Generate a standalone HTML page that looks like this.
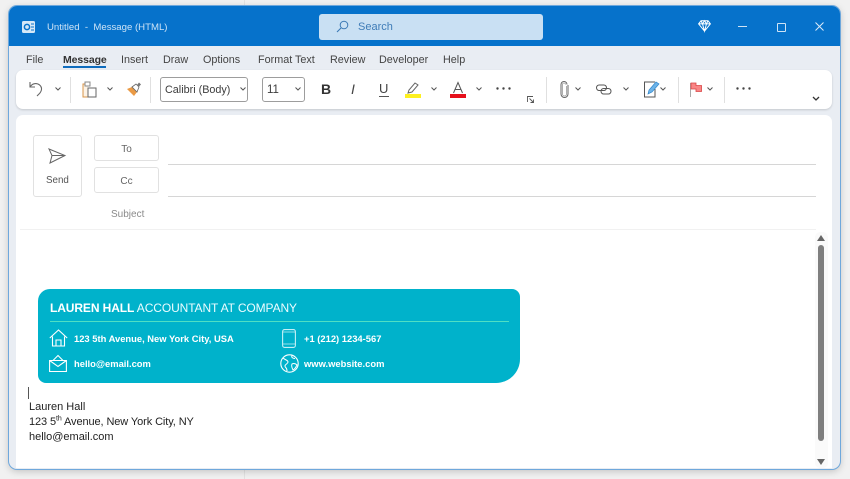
<!DOCTYPE html>
<html><head><meta charset="utf-8">
<style>
html,body{margin:0;padding:0}
body{width:850px;height:479px;overflow:hidden;background:#f1f1f1;position:relative;font-family:"Liberation Sans",sans-serif;color:#333}
#w{position:absolute;left:0;top:0;width:850px;height:479px;filter:blur(.3px)}
.a{position:absolute;white-space:nowrap}
.t{font-size:10.8px;line-height:14px;color:#3c3c3c}
.tab{top:53px;font-size:10.8px;line-height:14px;color:#444}
.sig{color:#fff;font-weight:bold;font-size:9.4px;line-height:12px}
.sep{position:absolute;top:77px;width:1px;height:26px;background:#e0e0e0}
svg{position:absolute;overflow:visible}
</style></head><body><div id="w">
<div class="a" style="left:244px;top:0;width:1px;height:479px;background:#e2e2e2"></div>
<div class="a" style="left:9px;top:6px;width:831px;height:463px;background:#e9edf3;border-radius:8px;box-shadow:0 0 0 1px #6fa8dc,0 2px 8px rgba(0,0,0,.22)"></div>
<div class="a" style="left:9px;top:6px;width:831px;height:40px;background:#0672cb;border-radius:8px 8px 0 0"></div>

<svg style="left:21px;top:20px" width="16" height="14" viewBox="0 0 16 14"><rect x="1" y="1" width="13" height="12" rx="1.5" fill="#d5e8f7"/><circle cx="6" cy="7" r="2.6" fill="none" stroke="#0672cb" stroke-width="1.5"/><path d="M10 4h3M10 7h3M10 10h3" stroke="#0672cb"/></svg>
<div class="a" style="left:47px;top:21px;font-size:9.6px;line-height:14px;color:#cde3f6">Untitled&nbsp; -&nbsp; Message (HTML)</div>

<div class="a" style="left:319px;top:14px;width:224px;height:26px;background:#c9e0f3;border-radius:3px"></div>
<svg style="left:336px;top:20px" width="13" height="13" viewBox="0 0 13 13"><circle cx="8" cy="5" r="3.8" fill="none" stroke="#3b79b5"/><path d="M5 8l-4 4" stroke="#3b79b5" stroke-width="1.1"/></svg>
<div class="a" style="left:358px;top:20px;font-size:11px;line-height:14px;color:#3f7cb7">Search</div>

<svg style="left:698px;top:20px" width="13" height="12" viewBox="0 0 13 12"><path d="M3 .7h7l2.4 3.2-5.900 7.200L.6 3.900zM.6 3.900h11.800M4.500 3.900l2 7.200 2-7.200M3 .7l1.500 3.200 2-3.200 2 3.200L10 .7" fill="none" stroke="#fff" stroke-width="1"/></svg>
<div class="a" style="left:738px;top:26px;width:9px;height:1px;background:#cfe3f5"></div>
<div class="a" style="left:777px;top:23px;width:7px;height:7px;border:1px solid #cfe3f5;border-radius:1px"></div>
<svg style="left:815px;top:22px" width="9" height="9" viewBox="0 0 9 9"><path d="M.5.5l8 8M8.500.5l-8 8" stroke="#dcebf8" stroke-width="1"/></svg>

<div class="a tab" style="left:26px">File</div>
<div class="a tab" style="left:63px;font-weight:bold;font-size:10.5px;color:#333;letter-spacing:-.1px">Message</div>
<div class="a" style="left:63px;top:66px;width:43px;height:2px;background:#0f6cbd"></div>
<div class="a tab" style="left:121px">Insert</div>
<div class="a tab" style="left:163px">Draw</div>
<div class="a tab" style="left:203px">Options</div>
<div class="a tab" style="left:258px">Format Text</div>
<div class="a tab" style="left:330px">Review</div>
<div class="a tab" style="left:379px">Developer</div>
<div class="a tab" style="left:443px">Help</div>

<div class="a" style="left:16px;top:70px;width:816px;height:39px;background:#fff;border-radius:7px;box-shadow:0 1px 2px rgba(0,0,0,.16)"></div>

<svg style="left:28px;top:80px" width="17" height="17" viewBox="0 0 17 17"><path d="M2 2v5h5M2 7c2-3 5-4 8-3 4 2 5 6 1 10l-2 2" fill="none" stroke="#666" stroke-width="1.100"/></svg>
<svg style="left:55px;top:87px" width="6" height="4"><path d="M.5.5L3 3 5.500.5" fill="none" stroke="#555"/></svg>
<div class="sep" style="left:70px"></div>
<svg style="left:81px;top:81px" width="17" height="17" viewBox="0 0 17 17"><path d="M7 3H2v13h5" fill="#fdf3e6" stroke="#d8944a"/><rect x="4" y="1" width="5" height="4" fill="#fff" stroke="#888"/><rect x="7" y="7" width="8" height="9" fill="#fff" stroke="#666"/></svg>
<svg style="left:107px;top:87px" width="6" height="4"><path d="M.5.5L3 3 5.500.5" fill="none" stroke="#555"/></svg>
<svg style="left:126px;top:82px" width="16" height="15" viewBox="0 0 16 15"><path d="M1 7l5-2 5 5-3 4z" fill="#ea9a45"/><path d="M6 5l4-3 3 3-2 5z" fill="#fff" stroke="#666" stroke-width=".8"/><path d="M11 3l2-2.500 2 2-2 2z" fill="#777"/></svg>
<div class="sep" style="left:150px"></div>

<div class="a" style="left:160px;top:77px;width:88px;height:25px;border:1px solid #9d9d9d;border-radius:3px;box-sizing:border-box"></div>
<div class="a t" style="left:165px;top:83px">Calibri (Body)</div>
<svg style="left:240px;top:87px" width="6" height="4"><path d="M.5.5L3 3 5.500.5" fill="none" stroke="#555"/></svg>
<div class="a" style="left:262px;top:77px;width:43px;height:25px;border:1px solid #9d9d9d;border-radius:3px;box-sizing:border-box"></div>
<div class="a t" style="left:267px;top:83px;font-size:11.500px">11</div>
<svg style="left:295px;top:87px" width="6" height="4"><path d="M.5.5L3 3 5.500.5" fill="none" stroke="#555"/></svg>

<div class="a" style="left:321px;top:81px;font-size:14px;line-height:16px;font-weight:bold;color:#333">B</div>
<div class="a" style="left:351px;top:81px;font-size:14px;line-height:16px;font-style:italic;color:#444">I</div>
<div class="a" style="left:379px;top:81px;font-size:13px;line-height:16px;color:#444">U</div>
<div class="a" style="left:379px;top:96px;width:10px;height:1px;background:#555"></div>
<svg style="left:405px;top:81px" width="16" height="17" viewBox="0 0 16 17"><path d="M3 12l1-3 6-7 3 2-6 7z" fill="#fff" stroke="#666"/><rect y="13" width="16" height="4" fill="#fdf01f"/></svg>
<svg style="left:431px;top:87px" width="6" height="4"><path d="M.5.5L3 3 5.500.5" fill="none" stroke="#555"/></svg>
<svg style="left:450px;top:81px" width="16" height="17" viewBox="0 0 16 17"><path d="M3.500 12L8 1.500 12.500 12M5 8.500h6" fill="none" stroke="#555" stroke-width="1"/><rect y="13" width="16" height="4" fill="#e6101c"/></svg>
<svg style="left:476px;top:87px" width="6" height="4"><path d="M.5.5L3 3 5.500.5" fill="none" stroke="#555"/></svg>
<svg style="left:496px;top:87px" width="15" height="3"><circle cx="1.500" cy="1.500" r="1.200" fill="#444"/><circle cx="7.500" cy="1.500" r="1.200" fill="#444"/><circle cx="13.500" cy="1.500" r="1.200" fill="#444"/></svg>
<svg style="left:527px;top:96px" width="7" height="7" viewBox="0 0 7 7"><path d="M.5 6V.5H6M2.500 2.500L6.500 6.500M6.500 3.500v3h-3" fill="none" stroke="#555" stroke-width=".9"/></svg>
<div class="sep" style="left:546px"></div>

<svg style="left:560px;top:81px" width="9" height="17" viewBox="0 0 9 17"><path d="M6.500 5v8a2 2 0 0 1-4 0V3.500a1.500 1.500 0 0 1 3 0" fill="none" stroke="#999" stroke-width=".8"/><path d="M8 4v9a3.500 3.500 0 0 1-7 0V3.500a3 3 0 0 1 6 0" fill="none" stroke="#666" stroke-width="1"/></svg>
<svg style="left:575px;top:87px" width="6" height="4"><path d="M.5.5L3 3 5.500.5" fill="none" stroke="#555"/></svg>
<svg style="left:596px;top:84px" width="16" height="11" viewBox="0 0 16 11"><rect x=".5" y="1" width="10" height="5.500" rx="2.700" fill="none" stroke="#555"/><rect x="5" y="4.500" width="10" height="5.500" rx="2.700" fill="none" stroke="#555"/></svg>
<svg style="left:623px;top:87px" width="6" height="4"><path d="M.5.5L3 3 5.500.5" fill="none" stroke="#555"/></svg>
<svg style="left:644px;top:81px" width="16" height="17" viewBox="0 0 16 17"><path d="M11 1H.5v15H11V8" fill="#fff" stroke="#555"/><path d="M4 13l1-4 7-8 3 2-7 8z" fill="#6db3e8" stroke="#2f86cc" stroke-width=".7"/></svg>
<svg style="left:660px;top:87px" width="6" height="4"><path d="M.5.5L3 3 5.500.5" fill="none" stroke="#555"/></svg>
<div class="sep" style="left:678px"></div>
<svg style="left:690px;top:82px" width="12" height="15" viewBox="0 0 12 15"><path d="M.5 1v14" stroke="#aaa"/><path d="M1 1h5v2.500h5.500v6H6V7H1z" fill="#f98585" stroke="#d94444" stroke-width=".8"/></svg>
<svg style="left:707px;top:87px" width="6" height="4"><path d="M.5.5L3 3 5.500.5" fill="none" stroke="#555"/></svg>
<div class="sep" style="left:724px"></div>
<svg style="left:736px;top:87px" width="15" height="3"><circle cx="1.500" cy="1.500" r="1.200" fill="#444"/><circle cx="7.500" cy="1.500" r="1.200" fill="#444"/><circle cx="13.500" cy="1.500" r="1.200" fill="#444"/></svg>
<svg style="left:812px;top:96px" width="8" height="6"><path d="M1 1l3 3 3-3" fill="none" stroke="#333" stroke-width="1.300"/></svg>

<div class="a" style="left:16px;top:115px;width:816px;height:353px;background:#fff;border-radius:7px 7px 0 0"></div>

<div class="a" style="left:33px;top:135px;width:49px;height:62px;border:1px solid #e1e1e1;border-radius:3px;box-sizing:border-box"></div>
<svg style="left:48px;top:148px" width="18" height="16" viewBox="0 0 18 16"><path d="M1 1l16 6.500L2 15l2-7.500zM4 7.500h13" fill="none" stroke="#666" stroke-width="1"/></svg>
<div class="a" style="left:46px;top:174px;font-size:9.800px;line-height:14px;color:#555">Send</div>
<div class="a" style="left:94px;top:135px;width:65px;height:26px;border:1px solid #e1e1e1;border-radius:3px;box-sizing:border-box"></div>
<div class="a" style="left:94px;top:143px;width:65px;text-align:center;font-size:10px;line-height:14px;color:#666">To</div>
<div class="a" style="left:94px;top:167px;width:65px;height:26px;border:1px solid #e1e1e1;border-radius:3px;box-sizing:border-box"></div>
<div class="a" style="left:94px;top:175px;width:65px;text-align:center;font-size:10px;line-height:14px;color:#666">Cc</div>
<div class="a" style="left:111px;top:208px;font-size:10px;line-height:14px;color:#8a8a8a">Subject</div>
<div class="a" style="left:168px;top:164px;width:648px;height:1px;background:#d6d6d6"></div>
<div class="a" style="left:168px;top:196px;width:648px;height:1px;background:#d6d6d6"></div>
<div class="a" style="left:20px;top:229px;width:796px;height:1px;background:#f1f1f1"></div>

<div class="a" style="left:38px;top:289px;width:482px;height:94px;background:#00b2cb;border-radius:12px 8px 24px 8px"></div>
<div class="a" style="left:50px;top:300px;font-size:12px;line-height:16px;color:#eafcff;letter-spacing:-.1px"><b style="color:#fff">LAUREN HALL</b> ACCOUNTANT AT COMPANY</div>
<div class="a" style="left:50px;top:321px;width:459px;height:1px;background:#4fdfc4"></div>
<svg style="left:49px;top:329px" width="19" height="18" viewBox="0 0 19 18"><path d="M.8 9L9.500 1l8.700 8M3.500 7.500V17h12V7.500M7 17v-6h5v6" fill="none" stroke="#fff" stroke-width="1.100"/></svg>
<div class="a sig" style="left:74px;top:333px">123 5th Avenue, New York City, USA</div>
<svg style="left:49px;top:354px" width="18" height="18" viewBox="0 0 18 18"><path d="M.6 6.500h16.800V17.500H.6zM.6 6.500L9 12.500l8.400-6M4 6.500L9 1.500l5 5" fill="none" stroke="#fff" stroke-width="1.100"/></svg>
<div class="a sig" style="left:74px;top:358px">hello@email.com</div>
<svg style="left:282px;top:329px" width="14" height="19" viewBox="0 0 14 19"><rect x=".6" y=".6" width="12.800" height="17.800" rx="2" fill="none" stroke="#c5f0f6" stroke-width="1.100"/><path d="M.6 15h12.800M.6 3h12.800" stroke="#c5f0f6" stroke-width=".8"/></svg>
<div class="a sig" style="left:304px;top:333px">+1 (212) 1234-567</div>
<svg style="left:280px;top:354px" width="19" height="19" viewBox="0 0 19 19"><circle cx="9.500" cy="9.500" r="8.700" fill="none" stroke="#fff" stroke-width="1.100"/><path d="M3 4c2 2 5 2 5 4s-3 2-3 4 2 1 2 5M12 1.500c-1 2 1 3 3 3M12 10c2-1 4 0 5 1-1 2-2 4-4 5-1-2-2-4-1-6z" fill="none" stroke="#fff" stroke-width="1"/></svg>
<div class="a sig" style="left:304px;top:358px">www.website.com</div>

<div class="a" style="left:28px;top:387px;width:1px;height:12px;background:#555"></div>
<div class="a" style="left:29px;top:400px;font-size:11px;line-height:15px;color:#222">Lauren Hall<br><span style="letter-spacing:-.1px">123 5<sup style="font-size:7px;line-height:0">th</sup> Avenue, New York City, NY</span><br>hello@email.com</div>

<div class="a" style="left:815px;top:232px;width:13px;height:236px;background:#fafafa;border-radius:5px"></div>
<svg style="left:817px;top:235px" width="8" height="6"><path d="M4 0l4 6H0z" fill="#666"/></svg>
<div class="a" style="left:818px;top:245px;width:6px;height:196px;background:#7f7f7f;border-radius:3px"></div>
<svg style="left:817px;top:459px" width="8" height="6"><path d="M4 6L8 0H0z" fill="#666"/></svg>
</div></body></html>
